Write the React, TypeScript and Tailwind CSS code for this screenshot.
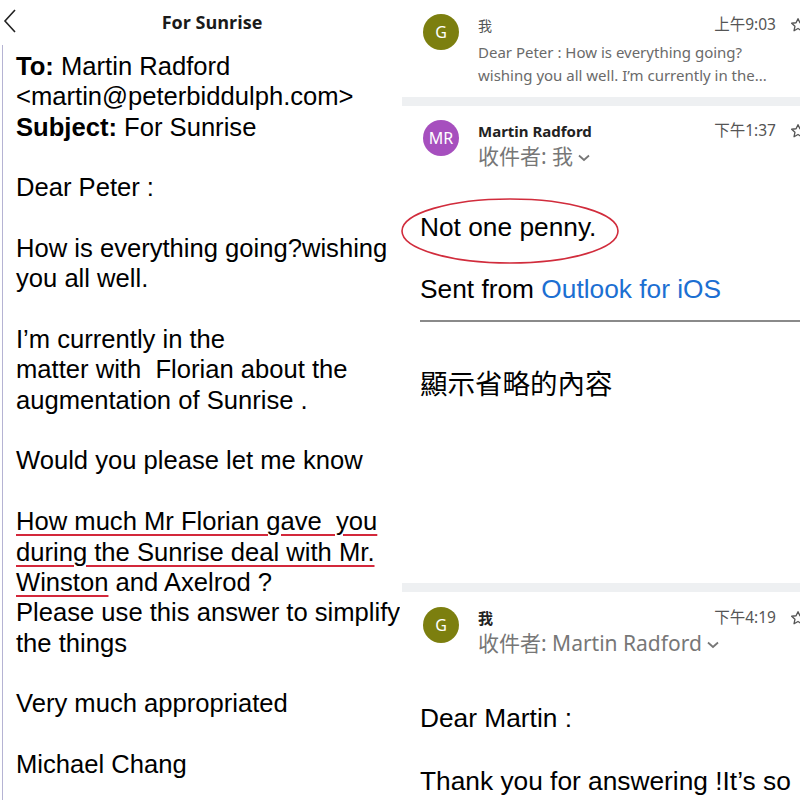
import type { ReactNode } from "react";

const bodyFont = { fontFamily: '"Liberation Sans", Arial, sans-serif' };
const uiFont = { fontFamily: '"Noto Sans", "Noto Sans CJK TC", sans-serif' };
const cjkFont = { fontFamily: '"Noto Sans CJK TC", "Noto Sans", sans-serif' };

function Line({ children }: { children?: ReactNode }) {
  return <div className="h-[30.35px] whitespace-pre">{children ?? " "}</div>;
}

function Marked({ children }: { children: ReactNode }) {
  return (
    <span className="underline decoration-[#d3283b] decoration-2 underline-offset-[4px]">
      {children}
    </span>
  );
}

function Star() {
  return (
    <svg width="16" height="16" viewBox="0 0 24 24" fill="none" stroke="#555" strokeWidth="2" className="shrink-0">
      <path d="M12 2.5l2.9 6.1 6.6.8-4.9 4.6 1.3 6.6L12 17.3l-5.9 3.3 1.3-6.6-4.9-4.6 6.6-.8z" strokeLinejoin="round" />
    </svg>
  );
}

function Avatar({ label, color }: { label: string; color: string }) {
  return (
    <div
      className={`flex h-9 w-9 shrink-0 items-center justify-center rounded-full text-[16px] text-white ${color}`}
      style={uiFont}
    >
      {label}
    </div>
  );
}

function Chevron() {
  return (
    <svg width="12" height="8" viewBox="0 0 12 8" fill="none" stroke="#777" strokeWidth="1.8" className="ml-[5px] inline-block align-middle">
      <path d="M1 1.5l5 4.5 5-4.5" />
    </svg>
  );
}

function LeftPanel() {
  return (
    <div className="flex w-[400px] shrink-0 flex-col overflow-hidden bg-white">
      <header className="relative flex h-[45px] items-center justify-center pl-[24px]">
        <svg width="14" height="24" viewBox="0 0 14 24" fill="none" stroke="#222" strokeWidth="1.6" className="absolute left-[3px] top-[9px]">
          <path d="M12 1L2 12l10 11" />
        </svg>
        <h1 className="mt-[-1px] text-[18px] font-bold text-[#1a1a1a]" style={{ fontFamily: '"Open Sans", "Liberation Sans", sans-serif' }}>
          For Sunrise
        </h1>
      </header>
      <div className="ml-[2px] flex-1 border-l-[1.5px] border-[#b5b3d3] pl-[13px] pt-[6px] text-[25.6px] leading-[30.35px] text-black" style={bodyFont}>
        <Line><b>To:</b> Martin Radford</Line>
        <Line>{"<martin@peterbiddulph.com>"}</Line>
        <Line><b>Subject:</b> For Sunrise</Line>
        <Line />
        <Line>Dear Peter :</Line>
        <Line />
        <Line>How is everything going?wishing</Line>
        <Line>you all well.</Line>
        <Line />
        <Line>I’m currently in the</Line>
        <Line>{"matter with  Florian about the"}</Line>
        <Line>augmentation of Sunrise .</Line>
        <Line />
        <Line>Would you please let me know</Line>
        <Line />
        <Line><Marked>{"How much Mr Florian gave  you"}</Marked></Line>
        <Line><Marked>during the Sunrise deal with Mr.</Marked></Line>
        <Line><Marked>Winston</Marked> and Axelrod ?</Line>
        <Line>Please use this answer to simplify</Line>
        <Line>the things</Line>
        <Line />
        <Line>Very much appropriated</Line>
        <Line />
        <Line>Michael Chang</Line>
      </div>
    </div>
  );
}

function Band() {
  return <div className="ml-[2px] h-[9px] bg-[#eef0f2]" />;
}

function RightPanel() {
  return (
    <div className="flex w-[400px] shrink-0 flex-col overflow-hidden bg-white">
      {/* collapsed message */}
      <section className="flex h-[97px] gap-[19px] pl-[23px] pt-[14px]" style={uiFont}>
        <Avatar label="G" color="bg-[#7c7f0f]" />
        <div className="flex min-w-0 flex-1 flex-col">
          <div className="flex h-[22px] items-center">
            <span className="flex-1 text-[14px] text-[#555]">我</span>
            <span className="text-[15.5px] text-[#555]">上午9:03</span>
            <span className="ml-[14px] mr-[-6px]"><Star /></span>
          </div>
          <div className="mt-[5px] whitespace-nowrap text-[15px] leading-[22.5px] text-[#6a6a6a]">
            <div>Dear Peter : How is everything going?</div>
            <div>wishing you all well. I’m currently in the...</div>
          </div>
        </div>
      </section>
      <Band />
      {/* reply */}
      <section className="relative h-[477px]">
        <div className="flex gap-[19px] pl-[23px] pt-[14px]" style={uiFont}>
          <Avatar label="MR" color="bg-[#a64fbe]" />
          <div className="flex min-w-0 flex-1 flex-col">
            <div className="flex h-[22px] items-center">
              <span className="flex-1 text-[15px] font-bold text-[#222]">Martin Radford</span>
              <span className="text-[15.5px] text-[#555]">下午1:37</span>
              <span className="ml-[14px] mr-[-6px]"><Star /></span>
            </div>
            <div className="text-[21px] leading-[28px] text-[#777]">
              收件者: 我<Chevron />
            </div>
          </div>
        </div>
        <div className="pl-[20px] pt-[42px] text-[26.3px] leading-[30.5px] text-black" style={bodyFont}>
          <div>Not one penny.</div>
          <div className="h-[31px]" />
          <div>
            Sent from <span className="text-[#1c6fd2]">Outlook for iOS</span>
          </div>
          <div className="mt-[16px] h-[2px] bg-[#8a8a8a]" />
          <div className="mt-[45px] text-[27.5px]" style={cjkFont}>顯示省略的內容</div>
        </div>
        <svg className="absolute left-0 top-[90px]" width="222" height="70" viewBox="0 0 222 70" fill="none">
          <ellipse cx="110" cy="35" rx="108" ry="32" stroke="#d12c3c" strokeWidth="1.6" />
        </svg>
      </section>
      <Band />
      {/* my reply */}
      <section className="flex-1">
        <div className="flex gap-[19px] pl-[23px] pt-[15px]" style={uiFont}>
          <Avatar label="G" color="bg-[#7c7f0f]" />
          <div className="flex min-w-0 flex-1 flex-col">
            <div className="flex h-[22px] items-center">
              <span className="flex-1 text-[15px] font-bold text-[#222]">我</span>
              <span className="text-[15.5px] text-[#555]">下午4:19</span>
              <span className="ml-[14px] mr-[-6px]"><Star /></span>
            </div>
            <div className="whitespace-nowrap text-[21px] leading-[28px] text-[#777]">
              收件者: Martin Radford<Chevron />
            </div>
          </div>
        </div>
        <div className="pl-[20px] pt-[46px] text-[26.3px] leading-[30.5px] text-black" style={bodyFont}>
          <div>Dear Martin :</div>
          <div className="h-[32px]" />
          <div className="whitespace-nowrap">Thank you for answering !It’s so</div>
        </div>
      </section>
    </div>
  );
}

export default function App() {
  return (
    <div className="flex h-[800px] w-[800px] overflow-hidden bg-white">
      <LeftPanel />
      <RightPanel />
    </div>
  );
}
